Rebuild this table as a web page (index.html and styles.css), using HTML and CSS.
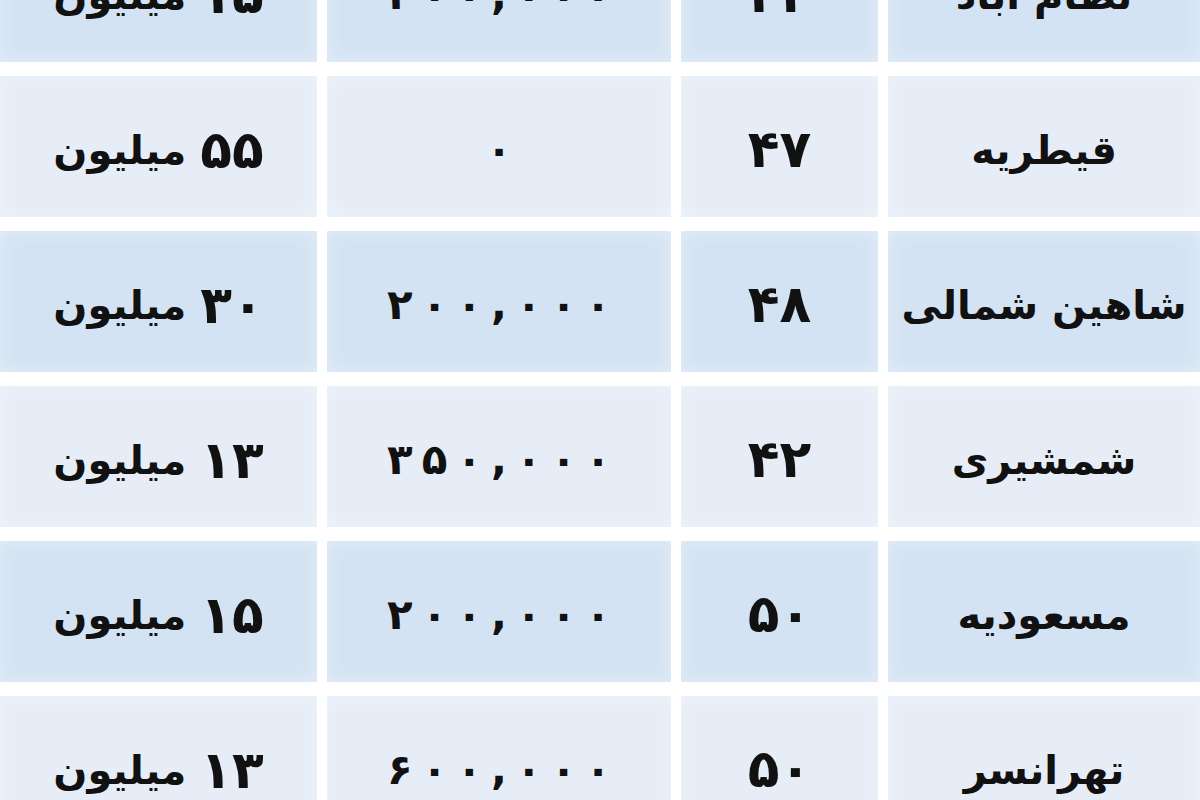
FILE: index.html
```html
<!DOCTYPE html>
<html lang="fa" dir="rtl">
<head>
<meta charset="utf-8">
<title>قیمت مسکن</title>
<link rel="stylesheet" href="styles.css">
</head>
<body>
<div class="viewport">
  <div class="table">
    <div class="cell dark name">نظام آباد</div>
    <div class="cell dark num">۴۴</div>
    <div class="cell dark price"><span class="digits"><span>۴</span><span>۰</span><span>۰</span><span>,</span><span>۰</span><span>۰</span><span>۰</span></span></div>
    <div class="cell dark total"><span class="d">۱۵</span> میلیون</div>

    <div class="cell light name">قیطریه</div>
    <div class="cell light num">۴۷</div>
    <div class="cell light price"><span class="digits"><span>۰</span></span></div>
    <div class="cell light total"><span class="d">۵۵</span> میلیون</div>

    <div class="cell dark name">شاهین شمالی</div>
    <div class="cell dark num">۴۸</div>
    <div class="cell dark price"><span class="digits"><span>۲</span><span>۰</span><span>۰</span><span>,</span><span>۰</span><span>۰</span><span>۰</span></span></div>
    <div class="cell dark total"><span class="d">۳۰</span> میلیون</div>

    <div class="cell light name">شمشیری</div>
    <div class="cell light num">۴۲</div>
    <div class="cell light price"><span class="digits"><span>۳</span><span>۵</span><span>۰</span><span>,</span><span>۰</span><span>۰</span><span>۰</span></span></div>
    <div class="cell light total"><span class="d">۱۳</span> میلیون</div>

    <div class="cell dark name">مسعودیه</div>
    <div class="cell dark num">۵۰</div>
    <div class="cell dark price"><span class="digits"><span>۲</span><span>۰</span><span>۰</span><span>,</span><span>۰</span><span>۰</span><span>۰</span></span></div>
    <div class="cell dark total"><span class="d">۱۵</span> میلیون</div>

    <div class="cell light name">تهرانسر</div>
    <div class="cell light num">۵۰</div>
    <div class="cell light price"><span class="digits"><span>۶</span><span>۰</span><span>۰</span><span>,</span><span>۰</span><span>۰</span><span>۰</span></span></div>
    <div class="cell light total"><span class="d">۱۳</span> میلیون</div>
  </div>
</div>
</body>
</html>
```

FILE: styles.css
```css
html, body {
  margin: 0;
  padding: 0;
  background: #ffffff;
}

.viewport {
  width: 1200px;
  height: 800px;
  overflow: hidden;
  background: #ffffff;
}

.table {
  direction: rtl;
  display: grid;
  grid-template-columns: 312px 197px 344px 317px;
  grid-auto-rows: 141px;
  column-gap: 10px;
  row-gap: 14px;
  margin-top: -79px;
  font-family: "DejaVu Sans", sans-serif;
  font-weight: bold;
  color: #111111;
}

.cell {
  display: flex;
  align-items: center;
  justify-content: center;
  font-size: 40px;
  box-shadow: inset 0 0 18px rgba(255, 255, 255, 0.35);
}

.dark {
  background: #d4e3f3;
}

.light {
  background: #e6edf7;
}

.name {
  font-size: 40px;
  padding-top: 6px;
}

.total {
  gap: 14px;
  padding-top: 6px;
}

.total .d {
  font-size: 52px;
  line-height: 1;
}

.price {
  font-size: 42px;
  padding-top: 6px;
}

.digits {
  direction: ltr;
  display: flex;
  gap: 9px;
}

.num {
  font-size: 52px;
  padding-top: 4px;
}
```
